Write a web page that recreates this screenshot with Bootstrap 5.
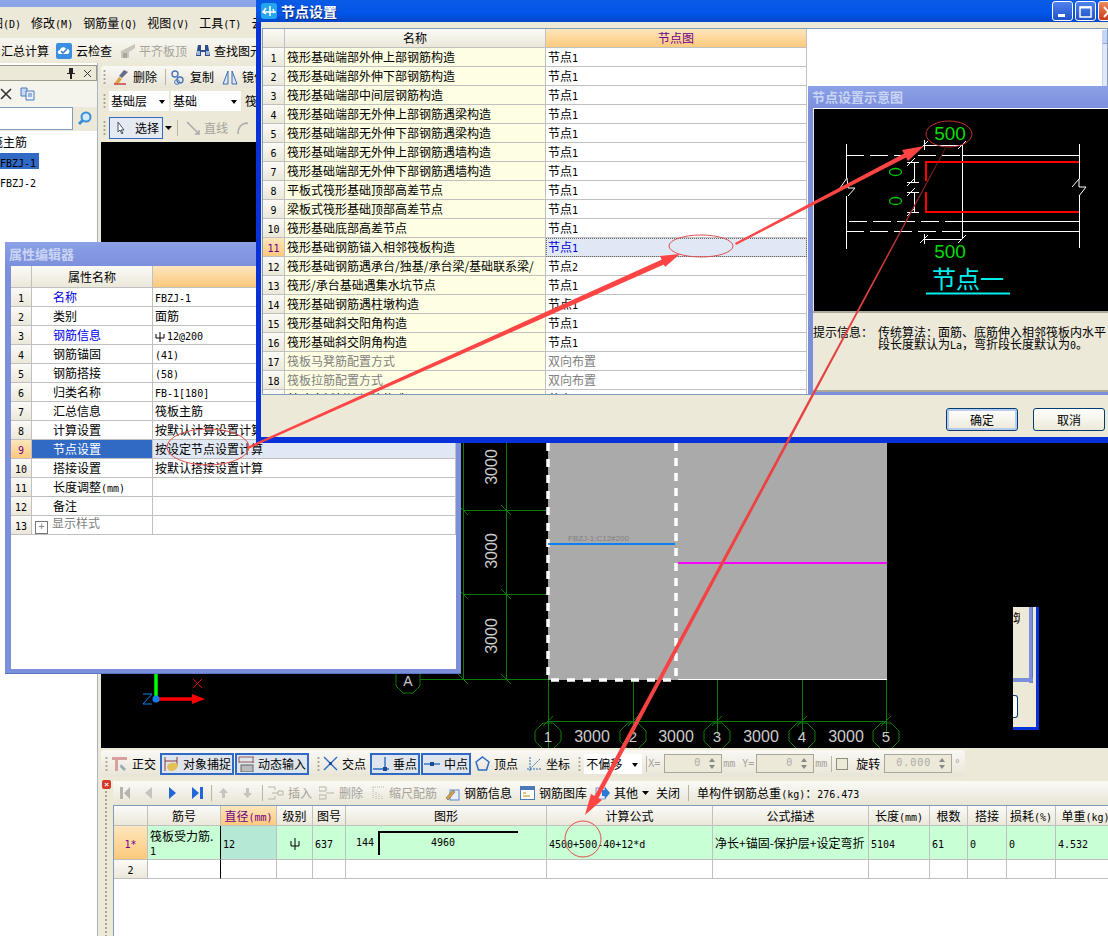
<!DOCTYPE html>
<html lang="zh">
<head>
<meta charset="utf-8">
<title>节点设置</title>
<link href="https://cdn.jsdelivr.net/npm/bootstrap@5.3.0/dist/css/bootstrap.min.css" rel="stylesheet">
<style>
html,body{margin:0;height:936px;width:1108px;overflow:hidden;background:#fff}
body,.dsk{font:12px/16px "Noto Sans CJK SC","Liberation Sans",sans-serif;color:#000}
.lt{font:10px/10px "DejaVu Sans Mono","Noto Sans CJK SC",monospace}
.dsk{width:1108px;height:936px;overflow:hidden;background:#ece9d8}
.appt{height:7px;background:#8aa6e6;flex:none}
.mnu{height:31px;flex:none;background:#ece9d8;margin-left:-9px;gap:10px}
.tb0{height:25px;flex:none;background:linear-gradient(#f7f6f1,#ece9d8);padding-left:1px}
.icn{flex:none;display:block}
.gray{color:#a5a39a}
.lpan{width:98px;flex:none;background:#fff;border-right:1px solid #a8b5c8}
.phead{height:16px;margin:2px 0 0;background:#ece9d8;border:1px solid #9d9a8c;border-left:0;color:#222}
.ptool{height:26px;background:#f4f3ec}
.psearch{height:24px;background:#ece9d8}
.psearch i{display:block;width:73px;height:23px;background:#fff;border:1px solid #7f9db9;border-left:0}
.tree{padding-top:2px;overflow:hidden}
.tree div{height:20px;line-height:17px;white-space:nowrap}
.tree .sel{width:39px;height:16px;background:#316ac5;margin-bottom:4px}
.rcol{min-width:0;background:#ece9d8}
.rtop{height:79px;flex:none;background:#ece9d8;padding:3px 0 0 3px}
.bar1{height:22px;background:linear-gradient(#f9f8f4,#e8e5d6);border-radius:3px}
.rw2{height:20px;margin-top:3px}
.rw3{height:22px;margin-top:6px}
.grip{width:3px;height:16px;flex:none;background-image:radial-gradient(circle,#a8a595 1px,transparent 1.2px);background-size:3px 4px;margin:0 3px 0 2px}
.sepx{width:1px;height:16px;background:#b8b5a5;flex:none}
.sel0{background:#fff;height:20px;line-height:20px;padding-left:2px;position:relative;display:inline-block;flex:none}
.sel0::after{content:"";position:absolute;right:4px;top:9px;border:3px solid transparent;border-top:4px solid #000;border-bottom:0}
.sw1{width:60px}
.sw2{width:70px;margin-left:2px}
.sw3{width:58px}
.selbtn{height:22px;border:1px solid #316ac5;background:#e4e9f2;padding:0 3px 0 6px}
.cav{background:#000;min-height:0;overflow:hidden;margin-left:3px;position:relative}
.cav svg{display:block}
.btm1{height:30px;flex:none;padding:2px 0 0 3px;background:#ece9d8}
.bar2{height:27px;width:864px;background:linear-gradient(#f9f8f4,#e8e5d6);border-radius:3px;padding-left:2px;position:relative}
.tgl{height:22px;border:2px solid #316ac5;background:#dfe5ec;padding:0 1px;flex:none}
.tgl+.tgl{margin-left:1px}
.inp0{height:19px;border:1px solid #a8a89a;background:#ece9d8;color:#aaa;text-align:right;line-height:16px;padding-right:20px;position:relative;letter-spacing:1px;display:inline-block;flex:none}
.inp0::after{content:"";position:absolute;right:6px;top:3px;border:3px solid transparent;border-bottom:4px solid #888;border-top:0}
.inp0::before{content:"";position:absolute;right:6px;bottom:3px;border:3px solid transparent;border-top:4px solid #888;border-bottom:0}
.iw1{width:58px}
.iw2{width:68px}
.chk0{width:12px;height:12px;border:1px solid #8f8f80;background:#ece9d8;flex:none}
.btm2{height:158px;flex:none}
.strip{width:15px;flex:none;background:#ece9d8;position:relative}
.strip::after{content:"";position:absolute;left:7px;top:12px;bottom:0;width:2px;background-image:radial-gradient(circle,#a8a595 1px,transparent 1.2px);background-size:2px 4px}
.clsr{width:9px;height:9px;background:#d43a2a;color:#fff;font:bold 8px/9px "Liberation Sans",sans-serif;text-align:center;border-radius:2px;margin:2px 0 0 4px;display:block}
.bcol{min-width:0;padding-top:3px;background:#ece9d8}
.bar3{height:24px;flex:none;background:linear-gradient(#fbfaf6,#e8e5d6)}
.gridw{flex:1;background:#fff;border-top:1px solid #7f9db9;border-left:1px solid #7f9db9;min-height:0}
.gridx.table{border-collapse:separate;border-spacing:0;table-layout:fixed;margin:0;width:auto;--bs-table-bg:transparent;border:0}
.gridx.table.tbw{width:1002px}
.gridx.table.tbp{width:445px}
.gridx.table.tbn{width:544px}
.gridx.table>:not(caption)>*>*{padding:0 2px;border:solid #c0c0c0;border-width:0 1px 1px 0;background:#fff;color:#000;box-shadow:none;vertical-align:middle;white-space:nowrap;overflow:hidden;line-height:14px;font-size:12px}
.gridx.table>:not(caption)>*>.hd{background:linear-gradient(#fbfaf6,#ebe8da);text-align:center;padding:0}
.gridx.table>:not(caption)>*>.hot{background:linear-gradient(#fce6bd,#fdc97c);color:#70008c;text-align:center;padding:0}
.gridx.table>:not(caption)>*>.yl{background:#fefee2}
.gridx.table>:not(caption)>*>.mut{color:#808080}
.gridx.table>:not(caption)>*>.cur{background:#e0e8f5;color:#0000d8;outline:1px dotted #666;outline-offset:-1px}
.gridx.table>:not(caption)>*>.blu{color:#0000e8}
.gridx.table>:not(caption)>*>.sl{background:#316ac5;color:#fff}
.gridx.table>:not(caption)>*>.vl{background:#e0e8f5}
.gridx.table>:not(caption)>*>.grn{background:#c9ffd5}
.gridx.table>:not(caption)>*>.grs{background:#b5e8d5}
.gridx.table>:not(caption)>*>.wrap{white-space:normal;line-height:14px}
.gridx.table>:not(caption)>*>.nopad{padding:0}
.gridx.table>:not(caption)>*>.bk{border-right-color:#000}
.h19 tr{height:19px}
.h19 tr.hr22{height:22px}
.grh{height:20px}
.gr1{height:34px}
.gr2{height:19px}
.gridx.table>:not(caption)>*>.pnm{padding-left:21px}
.plus{display:inline-block;width:13px;height:13px;line-height:10px;margin:0 4px 0 1px;border:1px solid #777;text-align:center;vertical-align:-2px}
.fig{display:block;height:33px}
.win{position:absolute}
.wprop{left:5px;top:242px;width:456px;height:432px;background:#7c8fda;padding:24px 5px 5px 6px;box-shadow:inset 0 -1px 0 #5f73c4}
.ttl{position:absolute;left:0;right:0;top:0;background:linear-gradient(#8ba0e6,#7c90dc);font-weight:700;color:#c8d4f4;padding-left:4px;font-size:13px}
.wprop .ttl{height:24px;line-height:24px}
.wbody{background:#fff;height:100%;overflow:hidden}
.wnode{left:256px;top:0;width:860px;height:443px;background:#0831d9;padding:22px 8px 6px 5px}
.wnode .ttl{height:22px;background:linear-gradient(#0a5ae4,#0256e8 60%,#0046c8);color:#fff;text-shadow:1px 1px 0 #0a2a80;font-size:14px;line-height:20px;padding-left:5px}
.wnin{background:#ece9d8;height:100%;position:relative;padding-top:6px}
.gbox{height:367px;margin-left:1px;background:#fff;border:1px solid #7f9db9;overflow:hidden;position:relative}
.scr{position:absolute;left:839px;top:1px;width:10px;height:60px;background:#dfe9fb;border-left:1px solid #c5d3ee}
.scr i{display:block;height:14px;background:#c4d4f8;border-bottom:1px solid #8da5d8}
.wbtn{position:absolute;top:1px;width:21px;height:20px;border:1px solid #fff;border-radius:3px;background:linear-gradient(#4f82ee,#2152c8)}
.wbtn.xx{background:linear-gradient(#ee8a5c,#c93a18)}
.wb1{left:796px}.wb2{left:819px}.wb3{left:842px}
.xpbtn{position:absolute;top:386px;width:72px;height:23px;padding:0;font-size:12px;line-height:19px;border:1px solid #003c74;border-radius:3px;background:linear-gradient(#fff,#ece9d8);color:#000}
.xpbtn.fc{box-shadow:inset 0 0 0 2px #b8cbee;left:685px}
.xpbtn.nf{left:772px}
.wsub{left:808px;top:86px;width:310px;height:309px;background:#7c8fda;padding:22px 6px 3px 5px}
.wsub .ttl{height:22px;line-height:22px;padding-left:4px}
.sub2{background:#ece9d8;height:100%;border-top:1px solid #fff;border-bottom:2px solid #aca899}
.subk{height:202px;background:#000;border-left:1px solid #ece9d8;overflow:hidden}
.subi{padding-top:13px;line-height:12px;border-top:2px solid #aca899}
.subi .k{width:65px;flex:none}
.ghost{left:1013px;top:607px;width:26px;height:123px;background:#ece9d8;border-right:3px solid #0831d9;border-bottom:3px solid #0831d9}
.ghost b{position:absolute;right:3px;top:0;bottom:44px;width:4px;background:#7c8fda;box-shadow:inset -1px 0 0 #5f73c4}
.ghost u{position:absolute;left:0;right:3px;top:71px;height:4px;background:#7c8fda;text-decoration:none}
.ghost s{position:absolute;left:0;top:88px;width:5px;height:23px;background:#fff;border:1px solid #003c74;border-left:0;border-radius:0 3px 3px 0}
.ghost em{position:absolute;left:0;top:4px;font-style:normal;width:7px;overflow:hidden;line-height:14px}
.ovl{position:absolute;left:0;top:0;pointer-events:none}
.m1{margin-left:1px}.m2{margin-left:2px}.m5{margin-left:5px}.m7{margin-left:7px}.m9{margin-left:9px}.m10{margin-left:10px}.m14{margin-left:14px}.m15{margin-left:15px}.m16{margin-left:16px}.m17{margin-left:17px}
.r3{margin-right:3px}.r7{margin-right:7px}
.mgl{margin-left:-9px}
.main0{min-height:0}
.bmw{min-width:0}
</style>
</head>
<body>
<div class="dsk position-relative">
  <div class="d-flex flex-column h-100">
    <div class="appt"></div>
    <div class="mnu d-flex align-items-center flex-nowrap">
      <span class="text-nowrap">图<span class="lt">(D)</span></span>
      <span class="text-nowrap">修改<span class="lt">(M)</span></span>
      <span class="text-nowrap">钢筋量<span class="lt">(Q)</span></span>
      <span class="text-nowrap">视图<span class="lt">(V)</span></span>
      <span class="text-nowrap">工具<span class="lt">(T)</span></span>
      <span class="text-nowrap">云</span>
    </div>
    <div class="tb0 d-flex align-items-center text-nowrap">
      <span class="r7">汇总计算</span>
      <svg class="icn me-1" width="16" height="16" viewBox="0 0 16 16"><rect width="16" height="16" rx="2" fill="#3b8fe0"/><path d="M3 11c-2-1-1-4 1-4 0-3 5-4 6-1 3-1 5 3 2 5z" fill="#fff"/><path d="M5 8l2 2 4-4" fill="none" stroke="#2a78d0" stroke-width="1.5"/></svg>
      <span class="me-2">云检查</span>
      <svg class="icn r3" width="16" height="16" viewBox="0 0 16 16"><path d="M1 8l6-3 8-4v4l-6 4v6H1z" fill="#c8c6bc"/><path d="M3 10h4v5H3z" fill="#a9a79c"/></svg>
      <span class="gray me-2">平齐板顶</span>
      <svg class="icn r3" width="16" height="16" viewBox="0 0 16 16"><path d="M3 2h3v5h4V2h3l2 11h-5V9H6v4H1z" fill="#2c4d8a"/><path d="M2 8h3v4H2zM11 8h3v4h-3z" fill="#9bb8e0"/></svg>
      <span class="me-1">查找图元</span>
    </div>
    <div class="d-flex flex-grow-1 main0">
      <div class="lpan d-flex flex-column">
        <div class="phead d-flex align-items-center justify-content-end">
          <svg class="icn" width="8" height="11" viewBox="0 0 8 11"><path d="M2 0h4v5h2v1H5v5H3V6H0V5h2z" fill="#222"/></svg>
          <svg class="icn ms-2 me-1" width="9" height="9" viewBox="0 0 9 9"><path d="M1 1l7 7M8 1L1 8" stroke="#333" fill="none"/></svg>
        </div>
        <div class="ptool d-flex align-items-center">
          <svg class="icn" width="12" height="12" viewBox="0 0 12 12"><path d="M1 1l10 10M11 1L1 11" stroke="#333" stroke-width="1.6" fill="none"/></svg>
          <svg class="icn ms-2" width="15" height="14" viewBox="0 0 15 14"><path d="M1 1h6v8H1z" fill="#c6d8f2" stroke="#4a78c0"/><path d="M6 4h8v9H6z" fill="#e8f0fb" stroke="#4a78c0"/><path d="M8 7h4M8 9h4" stroke="#4a78c0"/></svg>
        </div>
        <div class="psearch d-flex align-items-start">
          <i></i>
          <svg class="icn ms-1 mt-1" width="15" height="15" viewBox="0 0 15 15"><circle cx="9" cy="6" r="4.5" fill="#d6e9fb" stroke="#3a8ed8" stroke-width="2"/><path d="M6 9l-4 4" stroke="#3a8ed8" stroke-width="3"/></svg>
        </div>
        <div class="tree">
          <div><span class="text-nowrap d-block mgl">筏主筋</span></div>
          <div class="sel"><span class="lt">FBZJ-1</span></div>
          <div><span class="lt">FBZJ-2</span></div>
        </div>
      </div>
      <div class="rcol flex-grow-1 d-flex flex-column bmw">
        <div class="rtop d-flex flex-column">
          <div class="bar1 d-flex align-items-center text-nowrap">
            <span class="grip"></span>
            <svg class="icn ms-1 me-1" width="16" height="16" viewBox="0 0 16 16"><path d="M11 1l4 2-6 6-3-2z" fill="#6a6a8a"/><path d="M6 8l3 2-3 4-5 1z" fill="#d8a040"/><path d="M1 15h12" stroke="#c33" stroke-width="1.4"/></svg>
            <span>删除</span><span class="sepx ms-2 me-1"></span>
            <svg class="icn me-1" width="16" height="16" viewBox="0 0 16 16"><circle cx="5" cy="5" r="3" fill="none" stroke="#4a78b8" stroke-width="1.4"/><circle cx="10" cy="11" r="3" fill="none" stroke="#4a78b8" stroke-width="1.4"/><circle cx="7" cy="13" r="2.4" fill="none" stroke="#4a78b8"/></svg>
            <span class="me-2">复制</span>
            <svg class="icn me-1" width="16" height="15" viewBox="0 0 16 15"><path d="M6 1L1 14h5zM10 1l5 13h-5z" fill="#dbe8fa" stroke="#3b6cb0"/></svg>
            <span>镜像</span>
          </div>
          <div class="rw2 d-flex align-items-center text-nowrap">
            <span class="grip"></span>
            <span class="sel0 sw1">基础层</span>
            <span class="sel0 sw2">基础</span>
            <span class="ms-1">筏</span>
          </div>
          <div class="rw3 d-flex align-items-center text-nowrap">
            <span class="grip"></span>
            <span class="selbtn d-flex align-items-center">
              <svg class="icn me-2" width="11" height="16" viewBox="0 0 11 16"><path d="M2 2v10l2-2 2 4 1-1-2-3h3z" fill="#fff" stroke="#456"/></svg>选择</span>
            <svg class="icn m2" width="7" height="5" viewBox="0 0 7 5"><path d="M0 0h7L3.500 4z"/></svg>
            <span class="sepx m5 me-2"></span>
            <svg class="icn me-1" width="14" height="14" viewBox="0 0 14 14"><path d="M1 1l12 12M13 9v4H9" stroke="#aaa" fill="none" stroke-width="1.5"/></svg>
            <span class="gray me-2">直线</span>
            <svg class="icn" width="14" height="14" viewBox="0 0 14 14"><path d="M2 13C2 6 6 2 12 2" stroke="#aaa" fill="none" stroke-width="1.5"/></svg>
          </div>
        </div>
        <div class="cav flex-grow-1">
          <svg width="1007" height="606" viewBox="101 142 1007 606">
            <rect x="548" y="443" width="339" height="237" fill="#aaa"/>
            <g fill="none" stroke="#0a7a0a">
              <path d="M463.500 440v239M506.500 440v239M463 510.500h85M463 594.500h85M420 679.500h128M548.500 680v68M633.500 680v55M717.500 680v55M802.500 680v55M886.500 680v55M548 721.500h338"/>
              <path d="M458 505l10 10M501 505l10 10M458 589l10 10M501 589l10 10M458 674l10 10M501 674l10 10M543 726l10-10M628 726l10-10M712 726l10-10M797 726l10-10M881 726l10-10"/>
              <polygon points="403,667 413,667 420,674 420,686 413,693 403,693 396,686 396,674"/>
              <polygon points="543,723 553,723 561,731 561,741 553,749 543,749 535,741 535,731"/>
              <polygon points="628,723 638,723 646,731 646,741 638,749 628,749 620,741 620,731"/>
              <polygon points="712,723 722,723 730,731 730,741 722,749 712,749 704,741 704,731"/>
              <polygon points="797,723 807,723 815,731 815,741 807,749 797,749 789,741 789,731"/>
              <polygon points="881,723 891,723 899,731 899,741 891,749 881,749 873,741 873,731"/>
            </g>
            <g fill="none" stroke="#fff" stroke-width="3.500" stroke-dasharray="8 8">
              <path d="M548 443v237h125"/><path d="M676 443v237" stroke-dasharray="8 7"/>
            </g>
            <path d="M678 679.500h209" stroke="#fff"/>
            <path d="M548 544h127" stroke="#0a80f0" stroke-width="2"/>
            <path d="M678 563h209" stroke="#f0f" stroke-width="2"/>
            <text x="568" y="541" font-family="Liberation Sans" font-size="8" fill="#808080">FBZJ-1:C12#200</text>
            <g font-family="Liberation Sans" font-size="16" fill="#ccc" text-anchor="middle">
              <text x="408" y="686" font-size="14">A</text>
              <text x="548" y="742" font-size="15">1</text><text x="633" y="742" font-size="15">2</text><text x="717" y="742" font-size="15">3</text><text x="802" y="742" font-size="15">4</text><text x="886" y="742" font-size="15">5</text>
              <text x="592" y="742">3000</text><text x="676" y="742">3000</text><text x="761" y="742">3000</text><text x="846" y="742">3000</text>
              <text transform="translate(497 467) rotate(-90)">3000</text><text transform="translate(497 551) rotate(-90)">3000</text><text transform="translate(497 636) rotate(-90)">3000</text>
            </g>
            <path d="M156 670v28" stroke="#0f0" stroke-width="3.500"/>
            <path d="M157 699h40" stroke="#f00" stroke-width="3.500"/><path d="M192 694l13 5-13 5z" fill="#f00"/>
            <path d="M193 679l9 9M202 679l-9 9" stroke="#d00" fill="none"/>
            <path d="M143 694h9l-9 10h9" stroke="#0a80f0" fill="none"/><circle cx="156" cy="699" r="3.500" fill="#0a80f0"/>
          </svg>
        </div>
        <div class="btm1">
          <div class="bar2 d-flex align-items-center text-nowrap">
            <span class="grip"></span>
            <svg class="icn m1 me-1" width="16" height="16" viewBox="0 0 16 16"><path d="M0 1h15v3H6v11H3V4H0z" fill="#d8a0a0"/><path d="M9 8l5 5-2 2-4-4z" fill="#9ab" /></svg>
            <span class="me-1">正交</span>
            <span class="tgl d-flex align-items-center">
              <svg class="icn me-1" width="16" height="16" viewBox="0 0 16 16"><path d="M2 1v14M14 1v9M2 5h12" stroke="#8a3a3a" fill="none"/><path d="M4 10c2-4 9-4 11-1 0 3-3 6-7 6-2 0-4-2-4-5z" fill="#e3bf58"/></svg>对象捕捉</span>
            <span class="tgl d-flex align-items-center">
              <svg class="icn me-1" width="16" height="16" viewBox="0 0 16 16"><path d="M1 1h15M1 6h15M1 1v6M15 1v6" stroke="#9a5a5a" fill="none"/><rect x="3" y="9" width="12" height="7" fill="#bbb" stroke="#666"/></svg>动态输入</span>
            <span class="grip ms-2"></span>
            <svg class="icn me-1" width="15" height="15" viewBox="0 0 15 15"><path d="M1 1l13 13M14 1L1 14" stroke="#2c6cc8" stroke-width="1.4" fill="none"/><rect x="6" y="6" width="3" height="3" fill="#1a4a9a"/></svg>
            <span class="me-1">交点</span>
            <span class="tgl d-flex align-items-center">
              <svg class="icn me-1" width="16" height="16" viewBox="0 0 16 16"><path d="M12 1v13M0 13h16" stroke="#2c6cc8" stroke-width="1.400" fill="none"/><rect x="10" y="11" width="4" height="4" fill="#1a4a9a"/></svg>垂点</span>
            <span class="tgl d-flex align-items-center">
              <svg class="icn me-1" width="16" height="16" viewBox="0 0 16 16"><path d="M0 8h16" stroke="#2c6cc8" stroke-width="1.400"/><rect x="6" y="6" width="4" height="4" fill="#1a4a9a"/></svg>中点</span>
            <svg class="icn ms-1 me-1" width="15" height="15" viewBox="0 0 15 15"><path d="M7.500 1L14 6l-2.500 8h-8L1 6z" fill="none" stroke="#2c6cc8" stroke-width="1.500"/></svg>
            <span class="me-2">顶点</span>
            <svg class="icn me-1" width="16" height="16" viewBox="0 0 16 16"><path d="M4 1v14M1 13h14M4 13L14 3" stroke="#2c6cc8" stroke-dasharray="2 1" fill="none"/></svg>
            <span>坐标</span>
            <span class="grip ms-2"></span>
            <span class="sel0 sw3">不偏移</span>
            <span class="sepx ms-1"></span>
            <span class="lt gray m1">X=</span>
            <span class="inp0 iw1 ms-1 lt">0</span>
            <span class="lt gray m1">mm</span>
            <span class="lt gray m7">Y=</span>
            <span class="inp0 iw1 m2 lt">0</span>
            <span class="lt gray m1">mm</span>
            <span class="sepx ms-1"></span>
            <span class="chk0 ms-1 me-2"></span>
            <span>旋转</span>
            <span class="inp0 iw2 ms-1 lt">0.000</span>
            <span class="lt gray m2">°</span>
          </div>
        </div>
        <div class="btm2 d-flex">
          <div class="strip"><span class="clsr">×</span></div>
          <div class="bcol flex-grow-1 d-flex flex-column">
            <div class="bar3 d-flex align-items-center text-nowrap">
              <svg class="icn m7" width="11" height="12" viewBox="0 0 11 12"><path d="M0 0h3v12H0zM10 0v12L4 6z" fill="#b5b5b0"/></svg>
              <svg class="icn m14" width="7" height="12" viewBox="0 0 7 12"><path d="M7 0v12L0 6z" fill="#c5c5c0"/></svg>
              <svg class="icn m17" width="7" height="12" viewBox="0 0 7 12"><path d="M0 0v12l7-6z" fill="#2266d8"/></svg>
              <svg class="icn m16" width="11" height="12" viewBox="0 0 11 12"><path d="M0 0v12l7-6zM8 0h3v12H8z" fill="#2266d8"/></svg>
              <span class="sepx ms-2"></span>
              <svg class="icn m7" width="9" height="10" viewBox="0 0 9 10"><path d="M4.500 0L9 5H6v5H3V5H0z" fill="#c5c5c0"/></svg>
              <svg class="icn m15" width="9" height="10" viewBox="0 0 9 10"><path d="M4.500 10L9 5H6V0H3v5H0z" fill="#c5c5c0"/></svg>
              <span class="sepx m10"></span>
              <svg class="icn m5 me-1" width="16" height="14" viewBox="0 0 16 14"><path d="M0 1h7v3M0 13h7v-3M4 7h6M10 5h5v4h-5z" fill="none" stroke="#b5b5ab"/></svg><span class="gray">插入</span>
              <svg class="icn m7 me-1" width="16" height="14" viewBox="0 0 16 14"><path d="M0 1h7v4H0zM0 9h7v4H0zM7 7h8" fill="none" stroke="#b5b5ab"/></svg><span class="gray">删除</span>
              <svg class="icn m9 me-1" width="13" height="14" viewBox="0 0 13 14"><path d="M1 1v12M1 1h11M4 13V6M7 13V8M10 13v-3" fill="none" stroke="#b5b5ab" stroke-dasharray="1 1"/></svg><span class="gray">缩尺配筋</span>
              <svg class="icn ms-2 me-1" width="15" height="15" viewBox="0 0 15 15"><rect x="5" y="4" width="9" height="10" fill="#e5eefa" stroke="#5a88c8"/><path d="M1 12l7-8 2 2-7 8z" fill="#d8a040" stroke="#555" stroke-width=".5"/></svg><span>钢筋信息</span>
              <svg class="icn ms-2 me-1" width="15" height="14" viewBox="0 0 15 14"><rect x=".5" y=".5" width="14" height="13" fill="#fff" stroke="#4a78b8"/><rect x="1" y="1" width="13" height="3" fill="#4a78b8"/><path d="M3 7h3M3 10h7" stroke="#c80"/></svg><span>钢筋图库</span>
              <svg class="icn ms-2 me-1" width="15" height="15" viewBox="0 0 15 15"><rect x="1" y="2" width="9" height="11" fill="#e5eefa" stroke="#7a98c8"/><path d="M7 4h3V1l5 6-5 6v-3H7z" fill="#2a78d8"/></svg><span>其他</span>
              <svg class="icn ms-1" width="7" height="4" viewBox="0 0 7 4"><path d="M0 0h7L3.500 4z"/></svg>
              <span class="m7">关闭</span><span class="sepx ms-2"></span>
              <span class="ms-2">单构件钢筋总重<span class="lt">(kg)</span>：<span class="lt">276.473</span></span>
            </div>
            <div class="gridw overflow-hidden">
              <table class="table gridx tbw">
                <colgroup><col width="34"><col width="73"><col width="56"><col width="36"><col width="33"><col width="201"><col width="166"><col width="156"><col width="61"><col width="38"><col width="39"><col width="49"><col width="60"></colgroup>
                <thead><tr class="grh">
                  <th class="hd fw-normal"></th><th class="hd fw-normal">筋号</th><th class="hot fw-normal">直径<span class="lt">(mm)</span></th><th class="hd fw-normal">级别</th><th class="hd fw-normal">图号</th><th class="hd fw-normal">图形</th><th class="hd fw-normal">计算公式</th><th class="hd fw-normal">公式描述</th><th class="hd fw-normal">长度<span class="lt">(mm)</span></th><th class="hd fw-normal">根数</th><th class="hd fw-normal">搭接</th><th class="hd fw-normal">损耗<span class="lt">(%)</span></th><th class="hd fw-normal">单重<span class="lt">(kg)</span></th>
                </tr></thead>
                <tbody>
                  <tr class="gr1">
                    <td class="hot"><span class="lt">1*</span></td>
                    <td class="grn wrap bk">筏板受力筋.<br><span class="lt">1</span></td>
                    <td class="grs"><span class="lt">12</span></td>
                    <td class="grn text-center"><svg width="10" height="12" viewBox="0 0 10 12"><path d="M5 0v12M1 3v5h8V3" fill="none" stroke="#000"/></svg></td>
                    <td class="grn"><span class="lt">637</span></td>
                    <td class="grn nopad"><span class="fig d-flex align-items-center"><span class="lt m10">144</span><svg class="icn ms-1" width="140" height="25" viewBox="0 0 140 25"><path d="M1 25V2h139" fill="none" stroke="#000" stroke-width="2"/><text x="53" y="16" font-family="DejaVu Sans Mono" font-size="10">4960</text></svg></span></td>
                    <td class="grn"><span class="lt">4500+500-40+12*d</span></td>
                    <td class="grn">净长+锚固-保护层+设定弯折</td>
                    <td class="grn"><span class="lt">5104</span></td>
                    <td class="grn"><span class="lt">61</span></td>
                    <td class="grn"><span class="lt">0</span></td>
                    <td class="grn"><span class="lt">0</span></td>
                    <td class="grn"><span class="lt">4.532</span></td>
                  </tr>
                  <tr class="gr2">
                    <td class="hd"><span class="lt">2</span></td><td class="bk"></td><td></td><td></td><td></td><td></td><td></td><td></td><td></td><td></td><td></td><td></td><td></td>
                  </tr>
                </tbody>
              </table>
            </div>
          </div>
        </div>
      </div>
    </div>
  </div>

  <!-- hidden dialog behind the drawing -->
  <div class="win ghost"><em>筑</em><b></b><u></u><s></s></div>

  <!-- property editor -->
  <div class="win wprop">
    <div class="ttl">属性编辑器</div>
    <div class="wbody">
      <table class="table gridx h19 tbp">
        <colgroup><col width="21"><col width="121"><col width="303"></colgroup>
        <thead><tr class="hr22"><th class="hd fw-normal"></th><th class="hd fw-normal">属性名称</th><th class="hot fw-normal"></th></tr></thead>
        <tbody>
          <tr><td class="hd"><span class="lt">1</span></td><td class="pnm blu">名称</td><td><span class="lt">FBZJ-1</span></td></tr>
          <tr><td class="hd"><span class="lt">2</span></td><td class="pnm">类别</td><td>面筋</td></tr>
          <tr><td class="hd"><span class="lt">3</span></td><td class="pnm blu">钢筋信息</td><td><svg width="12" height="10" viewBox="0 0 12 10"><path d="M5 0v10M1 2v4h8V2" fill="none" stroke="#000"/></svg><span class="lt">12@200</span></td></tr>
          <tr><td class="hd"><span class="lt">4</span></td><td class="pnm">钢筋锚固</td><td><span class="lt">(41)</span></td></tr>
          <tr><td class="hd"><span class="lt">5</span></td><td class="pnm">钢筋搭接</td><td><span class="lt">(58)</span></td></tr>
          <tr><td class="hd"><span class="lt">6</span></td><td class="pnm">归类名称</td><td><span class="lt">FB-1[180]</span></td></tr>
          <tr><td class="hd"><span class="lt">7</span></td><td class="pnm">汇总信息</td><td>筏板主筋</td></tr>
          <tr><td class="hd"><span class="lt">8</span></td><td class="pnm">计算设置</td><td>按默认计算设置计算</td></tr>
          <tr><td class="hot"><span class="lt">9</span></td><td class="pnm sl">节点设置</td><td class="vl">按设定节点设置计算</td></tr>
          <tr><td class="hd"><span class="lt">10</span></td><td class="pnm">搭接设置</td><td>按默认搭接设置计算</td></tr>
          <tr><td class="hd"><span class="lt">11</span></td><td class="pnm">长度调整<span class="lt">(mm)</span></td><td></td></tr>
          <tr><td class="hd"><span class="lt">12</span></td><td class="pnm">备注</td><td></td></tr>
          <tr><td class="hd"><span class="lt">13</span></td><td class="mut"><span class="plus lt">+</span>显示样式</td><td></td></tr>
        </tbody>
      </table>
    </div>
  </div>

  <!-- node settings -->
  <div class="win wnode">
    <div class="ttl d-flex align-items-center">
      <svg class="icn me-1" width="16" height="16" viewBox="0 0 16 16"><rect width="16" height="16" rx="3" fill="#25a5ee"/><path d="M1 9h14M9 3v10M5 5l-3 4 3 2M12 6c1 2 1 3 0 4" stroke="#fff" stroke-width="1.500" fill="none"/></svg>
      <span>节点设置</span>
    </div>
    <span class="wbtn wb1"><svg width="19" height="18" viewBox="0 0 19 18"><rect x="5" y="11" width="7" height="3" fill="#fff"/></svg></span>
    <span class="wbtn wb2"><svg width="19" height="18" viewBox="0 0 19 18"><rect x="4" y="4" width="11" height="10" fill="none" stroke="#fff" stroke-width="1.500"/><path d="M4 4.500h11" stroke="#fff" stroke-width="2"/></svg></span>
    <span class="wbtn xx wb3"><svg width="19" height="18" viewBox="0 0 19 18"><path d="M5 4l9 10M14 4L5 14" stroke="#fff" stroke-width="2"/></svg></span>
    <div class="wnin">
      <div class="gbox">
        <table class="table gridx h19 tbn">
          <colgroup><col width="22"><col width="261"><col width="261"></colgroup>
          <thead><tr><th class="hd fw-normal"></th><th class="hd fw-normal">名称</th><th class="hot fw-normal">节点图</th></tr></thead>
          <tbody>
            <tr><td class="hd"><span class="lt">1</span></td><td class="yl">筏形基础端部外伸上部钢筋构造</td><td>节点<span class="lt">1</span></td></tr>
            <tr><td class="hd"><span class="lt">2</span></td><td class="yl">筏形基础端部外伸下部钢筋构造</td><td>节点<span class="lt">1</span></td></tr>
            <tr><td class="hd"><span class="lt">3</span></td><td class="yl">筏形基础端部中间层钢筋构造</td><td>节点<span class="lt">1</span></td></tr>
            <tr><td class="hd"><span class="lt">4</span></td><td class="yl">筏形基础端部无外伸上部钢筋遇梁构造</td><td>节点<span class="lt">1</span></td></tr>
            <tr><td class="hd"><span class="lt">5</span></td><td class="yl">筏形基础端部无外伸下部钢筋遇梁构造</td><td>节点<span class="lt">1</span></td></tr>
            <tr><td class="hd"><span class="lt">6</span></td><td class="yl">筏形基础端部无外伸上部钢筋遇墙构造</td><td>节点<span class="lt">1</span></td></tr>
            <tr><td class="hd"><span class="lt">7</span></td><td class="yl">筏形基础端部无外伸下部钢筋遇墙构造</td><td>节点<span class="lt">1</span></td></tr>
            <tr><td class="hd"><span class="lt">8</span></td><td class="yl">平板式筏形基础顶部高差节点</td><td>节点<span class="lt">1</span></td></tr>
            <tr><td class="hd"><span class="lt">9</span></td><td class="yl">梁板式筏形基础顶部高差节点</td><td>节点<span class="lt">1</span></td></tr>
            <tr><td class="hd"><span class="lt">10</span></td><td class="yl">筏形基础底部高差节点</td><td>节点<span class="lt">1</span></td></tr>
            <tr><td class="hot"><span class="lt">11</span></td><td class="yl">筏形基础钢筋锚入相邻筏板构造</td><td class="cur">节点<span class="lt">1</span></td></tr>
            <tr><td class="hd"><span class="lt">12</span></td><td class="yl">筏形基础钢筋遇承台/独基/承台梁/基础联系梁/</td><td>节点<span class="lt">2</span></td></tr>
            <tr><td class="hd"><span class="lt">13</span></td><td class="yl">筏形/承台基础遇集水坑节点</td><td>节点<span class="lt">1</span></td></tr>
            <tr><td class="hd"><span class="lt">14</span></td><td class="yl">筏形基础钢筋遇柱墩构造</td><td>节点<span class="lt">1</span></td></tr>
            <tr><td class="hd"><span class="lt">15</span></td><td class="yl">筏形基础斜交阳角构造</td><td>节点<span class="lt">1</span></td></tr>
            <tr><td class="hd"><span class="lt">16</span></td><td class="yl">筏形基础斜交阴角构造</td><td>节点<span class="lt">1</span></td></tr>
            <tr><td class="hd"><span class="lt">17</span></td><td class="yl mut">筏板马凳筋配置方式</td><td class="mut">双向布置</td></tr>
            <tr><td class="hd"><span class="lt">18</span></td><td class="yl mut">筏板拉筋配置方式</td><td class="mut">双向布置</td></tr>
            <tr><td class="hd"><span class="lt">19</span></td><td class="yl">基础底板封边钢筋构造</td><td>节点<span class="lt">1</span></td></tr>
          </tbody>
        </table>
        <div class="scr"><i></i></div>
      </div>
      <button type="button" class="btn xpbtn fc">确定</button>
      <button type="button" class="btn xpbtn nf">取消</button>
    </div>
  </div>

  <!-- node diagram -->
  <div class="win wsub">
    <div class="ttl">节点设置示意图</div>
    <div class="sub2 d-flex flex-column">
      <div class="subk">
        <svg width="294" height="202" viewBox="814 110 294 202">
          <g fill="none" stroke="#fff">
            <path d="M846.500 145v34M846.500 197v53"/>
            <path d="M846 156.500h116" stroke-dasharray="18 6"/><path d="M849 222.500h113" stroke-dasharray="18 6"/><path d="M846 232.500h116" stroke-dasharray="18 6"/>
            <path d="M962 156.500h117M962 222.500h117M962 232.500h117M962.500 145v95M1079.500 145v35M1079.500 196v53"/>
            <path d="M840 189l7-10 1 10h7l-7 8"/><path d="M1072 188l7-8v8h7l-7 9"/>
            <path d="M924 146.500h38M924 240.500h38M924.500 141v10M924.500 235v10M920 150l8-8M958 150l8-8M920 244l8-8M958 244l8-8"/>
            <path d="M914.500 163v20M914.500 193v20M907 163.500h12M907 183.500h12M907 193.500h12M907 213.500h12M907 167l8-8M907 187l8-8M907 197l8-8M907 217l8-8"/>
          </g>
          <path d="M926 182v-19h153M926 193v20h153" fill="none" stroke="#f00" stroke-width="2"/>
          <ellipse cx="895.500" cy="173" rx="6" ry="3.500" fill="none" stroke="#0c0" stroke-width="1.300"/>
          <ellipse cx="895.500" cy="202" rx="6" ry="3.500" fill="none" stroke="#0c0" stroke-width="1.300"/>
          <text x="950" y="141" font-family="Liberation Sans" font-size="19" fill="#0d0" text-anchor="middle">500</text>
          <text x="950" y="259" font-family="Liberation Sans" font-size="19" fill="#0d0" text-anchor="middle">500</text>
          <text x="968" y="289" font-family="Noto Sans CJK SC" font-size="24" fill="#0ee" text-anchor="middle">节点一</text>
          <path d="M926 294.500h84" stroke="#0ee" stroke-width="2"/>
        </svg>
      </div>
      <div class="subi d-flex flex-grow-1">
        <span class="k">提示信息：</span>
        <span>传统算法：面筋、底筋伸入相邻筏板内水平<br>段长度默认为<span class="lt">La</span>，弯折段长度默认为<span class="lt">0</span>。</span>
      </div>
    </div>
  </div>

  <!-- annotations -->
  <svg class="ovl" width="1108" height="936" viewBox="0 0 1108 936">
    <defs>
      <linearGradient id="fadeline" gradientUnits="userSpaceOnUse" x1="945" y1="148" x2="585" y2="815">
        <stop offset="0" stop-color="#6a1a1a"/><stop offset=".2" stop-color="#e04040"/><stop offset="1" stop-color="#f44"/>
      </linearGradient>
    </defs>
    <g fill="none" stroke="#e05050">
      <ellipse cx="208" cy="447" rx="41" ry="18"/>
      <ellipse cx="701" cy="246" rx="32" ry="11"/>
      <ellipse cx="949" cy="134" rx="23" ry="13" stroke="#c03030"/>
      <circle cx="583" cy="839" r="18"/>
    </g>
    <polygon points="247,447 663,259 665,264 248,449" fill="#f44"/><polygon points="680,254 660,256 665,267" fill="#f44"/>
    <polygon points="735,243 905,153 907,157 736,245" fill="#f44"/><polygon points="924,146 902,150 908,161" fill="#f44"/>
    <polygon points="945,148 594,797 598,799 946,148" fill="url(#fadeline)"/><polygon points="585,815 591,794 602,800" fill="#f44"/>
  </svg>
</div>
</body>
</html>
